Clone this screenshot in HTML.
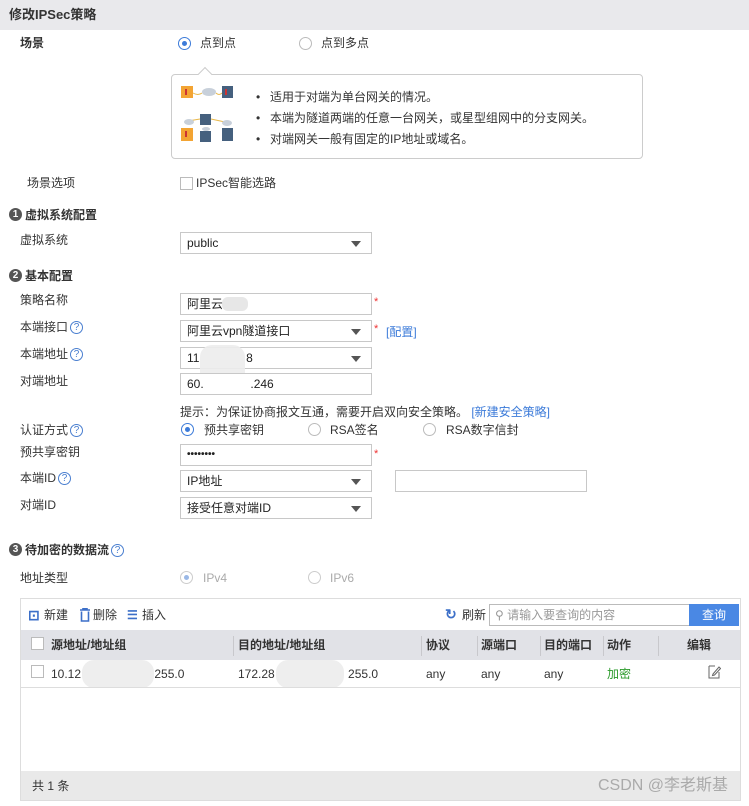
<!DOCTYPE html>
<html><head><meta charset="utf-8"><style>
*{box-sizing:border-box;margin:0;padding:0}
body{width:749px;height:806px;background:#fff;font-family:"Liberation Sans","Noto Sans CJK SC",sans-serif;font-size:12px;color:#333;position:relative;overflow:hidden}
.a{position:absolute;white-space:nowrap;line-height:14px}
.b{font-weight:bold}
.in{position:absolute;border:1px solid #c8c8c8;background:#fff;height:22px;left:180px;width:192px;padding-left:6px;line-height:20px;color:#222}
.sel::after{content:"";position:absolute;right:10px;top:8px;border-left:5px solid transparent;border-right:5px solid transparent;border-top:6px solid #555}
.r{position:absolute;width:13px;height:13px;border:1px solid #bbb;border-radius:50%;background:#fff}
.r.on::after{content:"";position:absolute;left:3px;top:3px;width:5px;height:5px;border-radius:50%;background:#3c7bd9}
.r.on{border-color:#3c7bd9}
.r.dis{border-color:#ccc}
.r.dis.on::after{background:#9ab8e6}
.q{display:inline-block;width:13px;height:13px;border:1px solid #4a7fd0;border-radius:50%;color:#4a7fd0;font-size:10px;line-height:11px;text-align:center;vertical-align:middle;margin-left:2px}
.num{position:absolute;width:13px;height:13px;border-radius:50%;background:#555;color:#fff;font-size:10px;line-height:13px;text-align:center;font-weight:bold}
.star{position:absolute;color:#e33;font-size:11px}
.lnk{color:#3c7bd9}
.blur{position:absolute;background:#e4e4e4;opacity:.9;border-radius:6px}
.th{position:absolute;top:630px;height:30px;line-height:30px;font-weight:bold;color:#333}
.dv{position:absolute;top:636px;width:1px;height:20px;background:#c8c8cc}
.cb{position:absolute;width:13px;height:13px;border:1px solid #bbb;background:#fff}
</style></head><body>
<div class="a" style="left:0;top:0;width:749px;height:30px;background:#e9e9ec"></div>
<div class="a b" style="left:9px;top:8px;font-size:13px">修改IPSec策略</div>

<div class="a b" style="left:20px;top:36px">场景</div>
<div class="r on" style="left:178px;top:37px"></div><div class="a" style="left:200px;top:36px">点到点</div>
<div class="r" style="left:299px;top:37px"></div><div class="a" style="left:321px;top:36px">点到多点</div>

<div class="a" style="left:171px;top:74px;width:472px;height:85px;border:1px solid #ccc;border-radius:4px"></div>
<div class="a" style="left:200px;top:69px;width:10px;height:10px;border-left:1px solid #ccc;border-top:1px solid #ccc;background:#fff;transform:rotate(45deg)"></div>
<svg class="a" style="left:180px;top:84px" width="60" height="60">
<rect x="1" y="2" width="12" height="12" fill="#f3a433"/><rect x="5" y="5" width="2" height="6" fill="#c33"/>
<path d="M13 9 Q18 12 22 9" stroke="#e8b84a" fill="none"/><ellipse cx="29" cy="8" rx="7" ry="4" fill="#c8d0da"/>
<path d="M36 9 Q39 12 42 9" stroke="#e8b84a" fill="none"/><rect x="42" y="2" width="11" height="12" fill="#45607e"/><rect x="45" y="5" width="2" height="6" fill="#c33"/>
<rect x="20" y="30" width="11" height="11" fill="#45607e"/><path d="M8 37 L20 35 M31 35 L45 38" stroke="#e8b84a" fill="none"/>
<ellipse cx="9" cy="38" rx="5" ry="3" fill="#c8d0da"/><ellipse cx="26" cy="45" rx="4" ry="2" fill="#c8d0da"/><ellipse cx="47" cy="39" rx="5" ry="3" fill="#c8d0da"/>
<rect x="1" y="44" width="12" height="13" fill="#f3a433"/><rect x="5" y="47" width="2" height="6" fill="#c33"/>
<rect x="20" y="47" width="11" height="11" fill="#45607e"/><rect x="42" y="44" width="11" height="13" fill="#45607e"/>
</svg>
<div class="a" style="left:256px;top:87px;line-height:21px">•<br>•<br>•</div>
<div class="a" style="left:270px;top:87px;line-height:21px">适用于对端为单台网关的情况。<br>本端为隧道两端的任意一台网关，或星型组网中的分支网关。<br>对端网关一般有固定的IP地址或域名。</div>

<div class="a" style="left:27px;top:176px">场景选项</div>
<div class="cb" style="left:180px;top:177px"></div><div class="a" style="left:196px;top:176px">IPSec智能选路</div>

<div class="num" style="left:9px;top:208px">1</div><div class="a b" style="left:25px;top:208px">虚拟系统配置</div>
<div class="a" style="left:20px;top:233px">虚拟系统</div>
<div class="in sel" style="top:232px">public</div>

<div class="num" style="left:9px;top:269px">2</div><div class="a b" style="left:25px;top:269px">基本配置</div>
<div class="a" style="left:20px;top:293px">策略名称</div>
<div class="in" style="top:293px">阿里云</div><div class="blur" style="left:222px;top:297px;width:26px;height:14px"></div><div class="star" style="left:374px;top:296px">*</div>
<div class="a" style="left:20px;top:320px">本端接口<span class="q">?</span></div>
<div class="in sel" style="top:320px">阿里云vpn隧道接口</div><div class="star" style="left:374px;top:323px">*</div><div class="a lnk" style="left:386px;top:325px">[配置]</div>
<div class="a" style="left:20px;top:347px">本端地址<span class="q">?</span></div>
<div class="in sel" style="top:347px">11&nbsp;&nbsp;&nbsp;&nbsp;&nbsp;&nbsp;&nbsp;&nbsp;&nbsp;&nbsp;&nbsp;&nbsp;&nbsp;&nbsp;8</div><div class="blur" style="left:200px;top:345px;width:45px;height:50px;border-radius:12px;background:#ececec"></div>
<div class="a" style="left:20px;top:374px">对端地址</div>
<div class="in" style="top:373px">60.&nbsp;&nbsp;&nbsp;&nbsp;&nbsp;&nbsp;&nbsp;&nbsp;&nbsp;&nbsp;&nbsp;&nbsp;&nbsp;&nbsp;.246</div>
<div class="a" style="left:180px;top:405px">提示：为保证协商报文互通，需要开启双向安全策略。 <span class="lnk">[新建安全策略]</span></div>

<div class="a" style="left:20px;top:423px">认证方式<span class="q">?</span></div>
<div class="r on" style="left:181px;top:423px"></div><div class="a" style="left:204px;top:423px">预共享密钥</div>
<div class="r" style="left:308px;top:423px"></div><div class="a" style="left:330px;top:423px">RSA签名</div>
<div class="r" style="left:423px;top:423px"></div><div class="a" style="left:446px;top:423px">RSA数字信封</div>
<div class="a" style="left:20px;top:445px">预共享密钥</div>
<div class="in" style="top:444px;font-size:10px;font-weight:bold">••••••••</div><div class="star" style="left:374px;top:448px">*</div>
<div class="a" style="left:20px;top:471px">本端ID<span class="q">?</span></div>
<div class="in sel" style="top:470px">IP地址</div>
<div class="in" style="top:470px;left:395px;width:192px"></div>
<div class="a" style="left:20px;top:498px">对端ID</div>
<div class="in sel" style="top:497px">接受任意对端ID</div>

<div class="num" style="left:9px;top:543px">3</div><div class="a b" style="left:25px;top:543px">待加密的数据流<span class="q" style="font-weight:normal">?</span></div>
<div class="a" style="left:20px;top:571px">地址类型</div>
<div class="r on dis" style="left:180px;top:571px"></div><div class="a" style="left:203px;top:571px;color:#aaa">IPv4</div>
<div class="r dis" style="left:308px;top:571px"></div><div class="a" style="left:330px;top:571px;color:#aaa">IPv6</div>

<div class="a" style="left:20px;top:598px;width:721px;height:203px;border:1px solid #ddd"></div>
<div class="a" style="left:28px;top:608px;color:#3c6fc8;font-weight:bold;font-size:14px">⊡</div><div class="a" style="left:44px;top:608px">新建</div>
<svg class="a" style="left:79px;top:608px" width="12" height="14"><path d="M1 2H11M4 2V0.5H8V2M2.5 3.5V13H9.5V3.5" stroke="#3c6fc8" stroke-width="1.6" fill="none"/></svg><div class="a" style="left:93px;top:608px">删除</div>
<div class="a" style="left:127px;top:608px;color:#3c6fc8;font-weight:bold">☰</div><div class="a" style="left:142px;top:608px">插入</div>
<div class="a" style="left:445px;top:607px;color:#3c6fc8;font-weight:bold;font-size:14px">↻</div><div class="a" style="left:462px;top:608px">刷新</div>
<div class="a" style="left:489px;top:604px;width:201px;height:22px;border:1px solid #bbb"></div>
<div class="a" style="left:495px;top:608px;color:#999">⚲ 请输入要查询的内容</div>
<div class="a" style="left:689px;top:604px;width:50px;height:22px;background:#4a88e4;color:#fff;text-align:center;line-height:22px">查询</div>
<div class="a" style="left:21px;top:630px;width:719px;height:30px;background:#e1e2e7"></div>
<div class="cb" style="left:31px;top:637px"></div>
<div class="th" style="left:51px">源地址/地址组</div><div class="dv" style="left:233px"></div>
<div class="th" style="left:238px">目的地址/地址组</div><div class="dv" style="left:421px"></div>
<div class="th" style="left:426px">协议</div><div class="dv" style="left:477px"></div>
<div class="th" style="left:481px">源端口</div><div class="dv" style="left:540px"></div>
<div class="th" style="left:544px">目的端口</div><div class="dv" style="left:603px"></div>
<div class="th" style="left:607px">动作</div><div class="dv" style="left:658px"></div>
<div class="th" style="left:687px">编辑</div>
<div class="cb" style="left:31px;top:665px"></div>
<div class="a" style="left:51px;top:667px">10.12&nbsp;&nbsp;&nbsp;&nbsp;&nbsp;&nbsp;&nbsp;&nbsp;&nbsp;&nbsp;&nbsp;&nbsp;&nbsp;&nbsp;&nbsp;&nbsp;&nbsp;&nbsp;&nbsp;&nbsp;&nbsp;&nbsp;255.0</div>
<div class="blur" style="left:82px;top:660px;width:72px;height:28px;border-radius:12px;background:#ececec"></div>
<div class="a" style="left:238px;top:667px">172.28&nbsp;&nbsp;&nbsp;&nbsp;&nbsp;&nbsp;&nbsp;&nbsp;&nbsp;&nbsp;&nbsp;&nbsp;&nbsp;&nbsp;&nbsp;&nbsp;&nbsp;&nbsp;&nbsp;&nbsp;&nbsp;&nbsp;255.0</div>
<div class="blur" style="left:276px;top:660px;width:68px;height:28px;border-radius:12px;background:#ececec"></div>
<div class="a" style="left:426px;top:667px">any</div><div class="a" style="left:481px;top:667px">any</div><div class="a" style="left:544px;top:667px">any</div>
<div class="a" style="left:607px;top:667px;color:#2a9a2a">加密</div>
<svg class="a" style="left:708px;top:665px" width="13" height="14"><path d="M1 1H7M1 1V13H11V7M5 9L11 2L12.5 3.5L6.5 10L4.5 10.5Z" stroke="#666" fill="none"/></svg>
<div class="a" style="left:21px;top:687px;width:719px;height:1px;background:#ddd"></div>
<div class="a" style="left:21px;top:771px;width:719px;height:29px;background:#e9e9e9"></div>
<div class="a" style="left:32px;top:779px">共 1 条</div>
<div class="a" style="left:598px;top:777px;color:#aaa;font-size:16px;line-height:18px">CSDN @李老斯基</div>
</body></html>
